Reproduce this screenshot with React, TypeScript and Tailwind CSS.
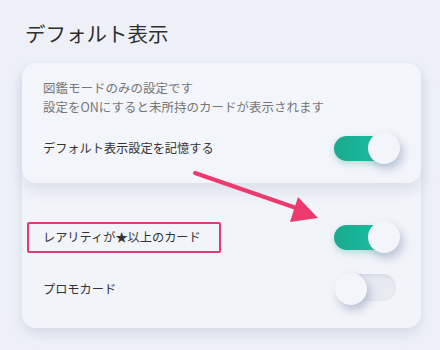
import React from 'react';

const font = { fontFamily: '"Noto Sans CJK JP", "Noto Sans", sans-serif' };

function Toggle({ on }: { on: boolean }) {
  return (
    <div className="relative w-[66px] h-[32px] shrink-0">
      {on ? (
        <div className="absolute left-0 top-[4px] w-[56px] h-[25px] rounded-full bg-gradient-to-r from-[#1aa98f] to-[#19c3a2] shadow-[0_3px_6px_rgba(20,150,120,0.25)]" />
      ) : (
        <div className="absolute left-[14px] top-[1px] w-[48px] h-[27px] rounded-full bg-[#e7eaf1] shadow-[inset_2px_2px_4px_rgba(170,180,200,0.35)]" />
      )}
      <div
        className={
          'absolute top-0 w-[32px] h-[32px] rounded-full bg-[#f3f5fa] shadow-[3px_5px_9px_rgba(120,135,170,0.45)] ' +
          (on ? 'left-[34px]' : 'left-[1px]')
        }
      />
    </div>
  );
}

export default function App() {
  return (
    <div className="relative w-[440px] h-[350px] overflow-hidden bg-[#edf1f7]" style={font}>
      <h1 className="pl-[25px] pt-[16px] mb-[13px] text-[20.5px] leading-[34px] text-[#2e2e2e] font-normal">
        デフォルト表示
      </h1>

      <div className="ml-[22px] w-[399px] rounded-[14px] bg-[#f1f4f9] shadow-[0_6px_12px_rgba(160,172,195,0.3)] pb-[23px]">
        <div className="rounded-[14px] bg-[#f2f5fa] shadow-[0_8px_14px_rgba(160,172,195,0.28)] px-[21px] pt-[15px] pb-[19px]">
          <p className="text-[12.5px] leading-[19px] text-[#777]">図鑑モードのみの設定です</p>
          <p className="text-[12.5px] leading-[19px] text-[#777]">設定をONにすると未所持のカードが表示されます</p>
          <div className="mt-[16px] flex items-center justify-between">
            <span className="text-[12.2px] font-normal text-[#333]">デフォルト表示設定を記憶する</span>
            <Toggle on />
          </div>
        </div>

        <div className="px-[21px] mt-[38px] flex items-center justify-between">
          <span className="-ml-[16px] h-[31px] flex items-center pl-[14px] pr-[18px] border-2 border-[#e23a72] rounded-[2px] text-[12.2px] font-normal text-[#333]">
            レアリティが★以上のカード
          </span>
          <Toggle on />
        </div>

        <div className="px-[21px] mt-[20px] flex items-center justify-between">
          <span className="text-[12.2px] font-normal text-[#333]">プロモカード</span>
          <Toggle on={false} />
        </div>
      </div>

      <svg className="absolute left-0 top-0 pointer-events-none" width="440" height="350" viewBox="0 0 440 350">
        <line x1="195" y1="173" x2="302" y2="210" stroke="#ec3a6e" strokeWidth="4" strokeLinecap="round" />
        <polygon points="318,218 298,197 290,222" fill="#ec3a6e" />
      </svg>
    </div>
  );
}
